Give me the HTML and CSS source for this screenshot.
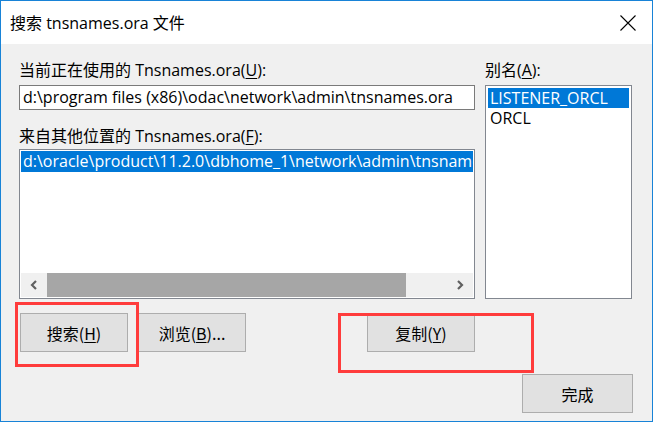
FILE: index.html
```html
<!DOCTYPE html>
<html lang="zh-CN">
<head>
<meta charset="utf-8">
<title>搜索 tnsnames.ora 文件</title>
<link rel="stylesheet" href="styles.css">
</head>
<body>
<div class="window">
  <div class="titlebar">
    <span class="title">搜索 tnsnames.ora 文件</span>
    <svg class="close" width="16" height="16" viewBox="0 0 16 16" aria-hidden="true">
      <path d="M0.5 0.5 L15.5 15.5 M15.5 0.5 L0.5 15.5" stroke="#000" stroke-width="1.1" fill="none"/>
    </svg>
  </div>
  <div class="body">
    <div class="main">
      <div class="col">
        <div class="label">当前正在使用的 Tnsnames.ora(<u>U</u>):</div>
        <div class="input">d:\program files (x86)\odac\network\admin\tnsnames.ora</div>
        <div class="label label-2">来自其他位置的 Tnsnames.ora(<u>F</u>):</div>
        <div class="listbox list-paths">
          <div class="rows">
            <div class="row selected">d:\oracle\product\11.2.0\dbhome_1\network\admin\tnsnames.ora</div>
          </div>
          <div class="hscroll">
            <div class="arrow">
              <svg width="10" height="10" viewBox="0 0 10 10"><path d="M7 1 L3 5 L7 9" stroke="#606060" stroke-width="2.2" fill="none"/></svg>
            </div>
            <div class="thumb"></div>
            <div class="track"></div>
            <div class="arrow">
              <svg width="10" height="10" viewBox="0 0 10 10"><path d="M3 1 L7 5 L3 9" stroke="#606060" stroke-width="2.2" fill="none"/></svg>
            </div>
          </div>
        </div>
      </div>
      <div class="col">
        <div class="label">别名(<u>A</u>):</div>
        <div class="listbox list-alias">
          <div class="row selected">LISTENER_ORCL</div>
          <div class="row">ORCL</div>
        </div>
      </div>
    </div>
    <div class="actions">
      <button class="btn">搜索(<u>H</u>)</button>
      <button class="btn">浏览(<u>B</u>)...</button>
      <button class="btn btn-copy">复制(<u>Y</u>)</button>
    </div>
    <div class="footer">
      <button class="btn btn-done">完成</button>
    </div>
  </div>
  <div class="mark mark-1"></div>
  <div class="mark mark-2"></div>
</div>
</body>
</html>
```

FILE: styles.css
```css
* { box-sizing: border-box; }
html, body { margin: 0; padding: 0; }
body {
  font-family: "Open Sans", "Noto Sans CJK SC", sans-serif;
  font-size: 16px;
  color: #000;
  background: #f0f0f0;
}
.window {
  position: relative;
  width: 653px;
  height: 422px;
  border: 1px solid #1883d7;
  background: #f0f0f0;
  overflow: hidden;
}
.titlebar {
  height: 43px;
  background: #fff;
  display: flex;
  align-items: center;
  justify-content: space-between;
  padding: 0 16px 0 9px;
}
.title {
  font-size: 16px;
  line-height: 20px;
}
.close { display: block; margin-top: 1px; }
.body {
  padding: 16px 19px 0 18px;
}
.main {
  display: grid;
  grid-template-columns: 456px 147px;
  column-gap: 10px;
}
.col { display: flex; flex-direction: column; }
.label {
  height: 20px;
  line-height: 20px;
  white-space: nowrap;
  margin-bottom: 5px;
}
.label-2 { margin-top: 16px; margin-bottom: 3px; }
u { text-decoration-thickness: 1px; text-underline-offset: 2px; }
.input {
  height: 25px;
  border: 1px solid #7a7a7a;
  background: #fff;
  padding: 0 3px;
  line-height: 23px;
  white-space: nowrap;
  overflow: hidden;
}
.listbox {
  border: 1px solid #828790;
  background: #fff;
  padding: 1px;
  overflow: hidden;
}
.list-paths {
  height: 150px;
  display: flex;
  flex-direction: column;
}
.rows { flex: 1; overflow: hidden; }
.row {
  white-space: nowrap;
  overflow: hidden;
  padding: 0 2px;
  height: 20px;
  line-height: 20px;
}
.list-paths .row { height: 21px; line-height: 21px; }
.row.selected { background: #0078d7; color: #fff; }
.list-alias { height: 214px; padding: 2px; }
.hscroll {
  height: 24px;
  display: flex;
  background: #f0f0f0;
}
.arrow {
  width: 26px;
  display: flex;
  align-items: center;
  justify-content: center;
}
.thumb { width: 359px; background: #a6a6a6; }
.track { flex: 1; }
.actions {
  display: flex;
  gap: 10px;
  margin-top: 14px;
  padding-left: 1px;
}
.btn {
  font-family: "Noto Sans CJK SC", "Open Sans", sans-serif;
  font-size: 16px;
  color: #000;
  width: 108px;
  height: 39px;
  background: #e1e1e1;
  border: 1px solid #adadad;
  padding: 0;
  margin: 0;
}
.btn-copy { margin-left: 111px; }
.footer {
  display: flex;
  justify-content: flex-end;
  margin-top: 22px;
}
.btn-done { width: 111px; }
.mark {
  position: absolute;
  border: 3px solid #ff3c3c;
}
.mark-1 { left: 14px; top: 301px; width: 124px; height: 65px; }
.mark-2 { left: 337px; top: 312px; width: 196px; height: 60px; }
```
